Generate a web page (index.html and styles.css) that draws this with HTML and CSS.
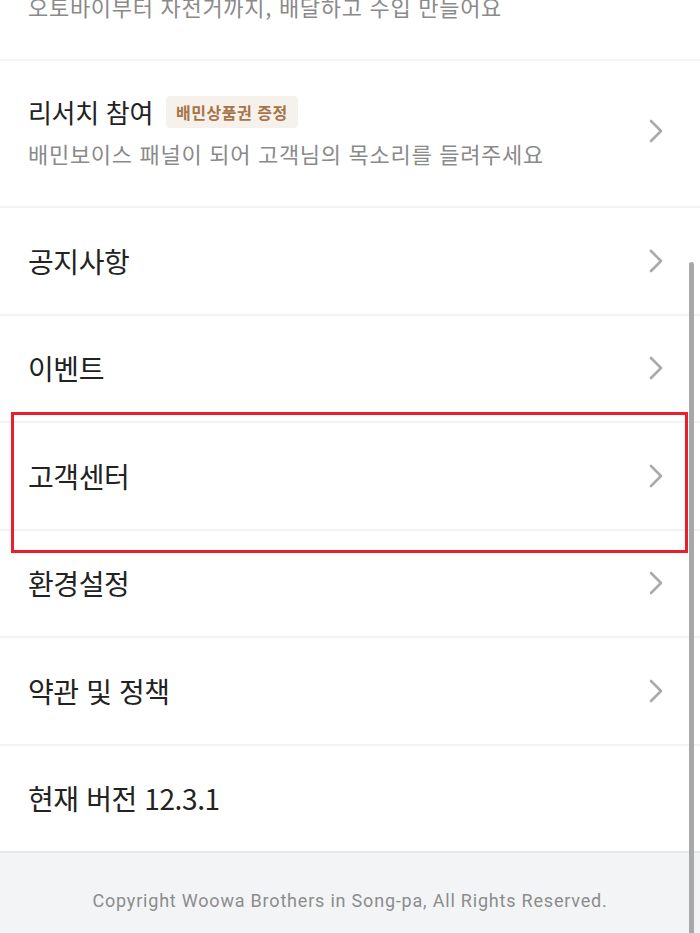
FILE: index.html
```html
<!DOCTYPE html>
<html lang="ko">
<head>
<meta charset="utf-8">
<title>더보기</title>
<link rel="stylesheet" href="styles.css">
</head>
<body>
<div class="page">
  <div class="menu">
    <div class="row row-partial">
      <p class="sub">오토바이부터 자전거까지, 배달하고 수입 만들어요</p>
    </div>
    <a class="row row-double">
      <div class="row-text">
        <div class="title-line">
          <span class="title title-sm">리서치 참여</span>
          <span class="badge">배민상품권 증정</span>
        </div>
        <p class="sub">배민보이스 패널이 되어 고객님의 목소리를 들려주세요</p>
      </div>
      <svg class="chev" viewBox="0 0 14 24"><path d="M2 2 L12 12 L2 22"/></svg>
    </a>
    <a class="row">
      <span class="title">공지사항</span>
      <svg class="chev" viewBox="0 0 14 24"><path d="M2 2 L12 12 L2 22"/></svg>
    </a>
    <a class="row">
      <span class="title">이벤트</span>
      <svg class="chev" viewBox="0 0 14 24"><path d="M2 2 L12 12 L2 22"/></svg>
    </a>
    <a class="row">
      <span class="title">고객센터</span>
      <svg class="chev" viewBox="0 0 14 24"><path d="M2 2 L12 12 L2 22"/></svg>
      <span class="highlight"></span>
    </a>
    <a class="row">
      <span class="title">환경설정</span>
      <svg class="chev" viewBox="0 0 14 24"><path d="M2 2 L12 12 L2 22"/></svg>
    </a>
    <a class="row">
      <span class="title">약관 및 정책</span>
      <svg class="chev" viewBox="0 0 14 24"><path d="M2 2 L12 12 L2 22"/></svg>
    </a>
    <div class="row row-last">
      <span class="title">현재 버전 12.3.1</span>
    </div>
  </div>
  <footer class="footer">
    <p>Copyright Woowa Brothers in Song-pa, All Rights Reserved.</p>
  </footer>
</div>
<div class="scrollbar"></div>
</body>
</html>
```
FILE: styles.css
```css
html, body {
  margin: 0;
  padding: 0;
  background: #ffffff;
}
body {
  width: 700px;
  height: 933px;
  overflow: hidden;
  position: relative;
  font-family: "Noto Sans CJK KR", "Noto Sans", sans-serif;
  color: #222222;
}
.page {
  display: flex;
  flex-direction: column;
  margin-top: -9px;
}
.menu {
  display: flex;
  flex-direction: column;
}
.row {
  position: relative;
  display: flex;
  align-items: center;
  justify-content: space-between;
  height: 105.5px;
  padding: 0 37px 0 28px;
  border-bottom: 2px solid #f3f3f3;
  text-decoration: none;
  color: inherit;
}
.row-partial {
  height: auto;
  padding-top: 0;
  padding-bottom: 38px;
  display: block;
}
.row-double {
  height: auto;
  padding-top: 33px;
  padding-bottom: 38px;
}
.row-last {
  border-bottom: 2px solid #e6e6e6;
}
.row-text {
  display: flex;
  flex-direction: column;
  gap: 8px;
}
.title-line {
  display: flex;
  align-items: center;
  gap: 13px;
  height: 36px;
}
.title {
  font-size: 28px;
  line-height: 36px;
  color: #222222;
  letter-spacing: -0.4px;
}
.title-sm {
  font-size: 26px;
  letter-spacing: -0.3px;
}
.sub {
  margin: 0;
  font-size: 22px;
  line-height: 30px;
  color: #8a8a8a;
  letter-spacing: 0.7px;
}
.badge {
  display: inline-flex;
  align-items: center;
  height: 32px;
  padding: 0 10px;
  border-radius: 4px;
  background: #f6f1eb;
  color: #a7744a;
  font-size: 16px;
  font-weight: 700;
  letter-spacing: 0.5px;
}
.chev {
  width: 14px;
  height: 24px;
  flex: none;
  fill: none;
  stroke: #aaaaaa;
  stroke-width: 2.6;
  stroke-linecap: round;
  stroke-linejoin: round;
}
.highlight {
  position: absolute;
  left: 11px;
  right: 12px;
  top: -11px;
  bottom: -24px;
  border: 3px solid #ea1f2b;
  pointer-events: none;
}
.footer {
  background: #f3f4f6;
  height: 120px;
  display: flex;
  justify-content: center;
}
.footer p {
  margin: 36px 0 0;
  font-family: Roboto, "Noto Sans", sans-serif;
  font-size: 18px;
  line-height: 24px;
  color: #8c8c8c;
  letter-spacing: 0.8px;
}
.scrollbar {
  position: absolute;
  left: 689px;
  top: 262px;
  width: 5px;
  height: 700px;
  border-radius: 3px;
  background: #a8a8a8;
}
```
